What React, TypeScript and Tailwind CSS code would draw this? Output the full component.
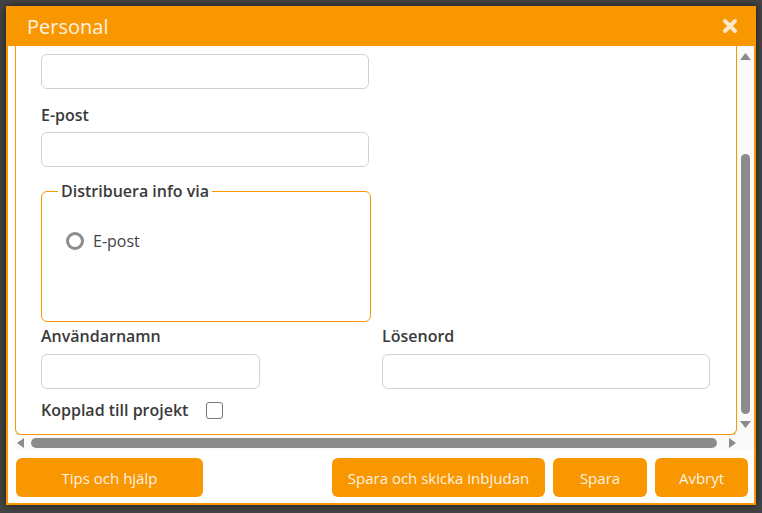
import {useState} from 'react'

const font = {fontFamily: '"Open Sans", "Noto Sans", sans-serif'}

function TextInput({className = ''}: {className?: string}) {
  return (
    <input
      type="text"
      className={`block h-[35px] rounded-[6px] border border-[#d2d2d2] bg-white px-2 text-[15px] text-[#333] outline-none ${className}`}
    />
  )
}

function Label({children}: {children: string}) {
  return <label className="block text-[16px] font-semibold leading-[22px] text-[#3a3a3a]">{children}</label>
}

function Button({children, className = ''}: {children: string; className?: string}) {
  return (
    <button
      type="button"
      className={`h-[39px] rounded-[6px] bg-[#f89700] pt-[1px] text-[15px] text-[#fdf1e2] ${className}`}>
      {children}
    </button>
  )
}

export default function App() {
  const [linked, setLinked] = useState(false)

  return (
    <div className="h-[513px] w-[762px] bg-[#444] pl-[6px] pt-[6px]" style={font}>
      <div className="flex h-[499px] w-[750px] flex-col border-2 border-t-0 border-[#f89700] bg-white shadow-[0_0_8px_rgba(0,0,0,0.6)]">
        {/* header */}
        <div className="-mx-[2px] flex h-[40px] items-center justify-between bg-[#f89700] pl-[21px] pr-[18px] pt-[2px]">
          <span className="text-[20px] leading-none text-[#fdf1e2]">Personal</span>
          <svg width="16" height="16" viewBox="0 0 16 16" className="mb-[2px]">
            <path d="M3 3 L13 13 M13 3 L3 13" stroke="#fde8cc" strokeWidth="4" strokeLinecap="round" />
          </svg>
        </div>

        {/* scroll area */}
        <div className="ml-[7px] flex h-[404px] flex-col bg-[#fafafa]">
          <div className="flex h-[389px]">
            <div className="w-[722px] overflow-hidden rounded-b-[6px] border border-t-0 border-[#f89700] bg-white pl-[25px]">
              <TextInput className="mt-[8px] w-[328px]" />

              <div className="mt-[15px]">
                <Label>E-post</Label>
                <TextInput className="mt-[6px] w-[328px]" />
              </div>

              <fieldset className="mt-[13px] h-[142px] w-[330px] rounded-[6px] border border-[#f89700] pl-[16px]">
                <legend className="px-[3px] text-[16px] font-semibold leading-[22px] text-[#3a3a3a]">
                  Distribuera info via
                </legend>
                <label className="mt-[27px] flex items-center gap-[9px] pl-[8px] text-[16px] text-[#444]">
                  <span className="h-[18px] w-[18px] rounded-full border-[3px] border-[#8c8c8c]" />
                  E-post
                </label>
              </fieldset>

              <div className="mt-[3px] flex">
                <div className="w-[341px]">
                  <Label>Användarnamn</Label>
                  <TextInput className="mt-[7px] w-[219px]" />
                </div>
                <div>
                  <Label>Lösenord</Label>
                  <TextInput className="mt-[7px] w-[328px]" />
                </div>
              </div>

              <div className="mt-[10px] flex items-center">
                <span className="text-[16px] font-semibold leading-[22px] text-[#3a3a3a]">Kopplad till projekt</span>
                <button
                  type="button"
                  onClick={() => setLinked(v => !v)}
                  className="ml-[18px] h-[17px] w-[17px] rounded-[3px] border-[1.5px] border-[#777] bg-white text-[12px] leading-none">
                  {linked ? '✓' : ''}
                </button>
              </div>
            </div>

            {/* vertical scrollbar */}
            <div className="flex w-[17px] flex-col items-center pt-[7px]">
              <svg width="11" height="7" viewBox="0 0 11 7">
                <path d="M5.5 0 L11 7 L0 7 Z" fill="#8a8a8a" />
              </svg>
              <div className="mt-[94px] h-[260px] w-[9px] rounded-full bg-[#8c8c8c]" />
              <svg width="11" height="7" viewBox="0 0 11 7" className="mt-[7px]">
                <path d="M0 0 L11 0 L5.5 7 Z" fill="#8a8a8a" />
              </svg>
            </div>
          </div>

          {/* horizontal scrollbar */}
          <div className="flex h-[15px] w-[722px] items-center pl-[2px]">
            <svg width="7" height="10" viewBox="0 0 7 10">
              <path d="M0 5 L7 0 L7 10 Z" fill="#8a8a8a" />
            </svg>
            <div className="ml-[7px] h-[10px] w-[686px] rounded-full bg-[#8c8c8c]" />
            <svg width="7" height="10" viewBox="0 0 7 10" className="ml-[12px]">
              <path d="M0 0 L7 5 L0 10 Z" fill="#8a8a8a" />
            </svg>
          </div>
        </div>

        {/* footer */}
        <div className="mt-[8px] flex pl-[8px] pr-[6px]">
          <Button className="w-[187px]">Tips och hjälp</Button>
          <div className="ml-auto flex gap-[8px]">
            <Button className="w-[213px]">Spara och skicka inbjudan</Button>
            <Button className="w-[94px]">Spara</Button>
            <Button className="w-[93px]">Avbryt</Button>
          </div>
        </div>
      </div>
    </div>
  )
}
